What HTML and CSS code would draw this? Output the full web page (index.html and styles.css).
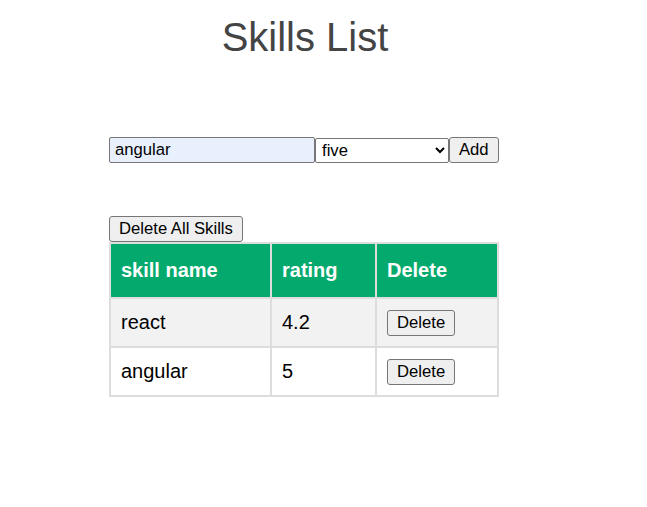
FILE: index.html
```html
<!DOCTYPE html>
<html>
<head>
<meta charset="utf-8">
<title>Skills List</title>
<link rel="stylesheet" href="styles.css">
</head>
<body>
<div class="app">
  <h1 class="title">Skills List</h1>
  <div class="form">
    <input class="skill-input" type="text" value="angular">
    <select class="rating-select">
      <option>five</option>
    </select>
    <button class="btn">Add</button>
  </div>
  <div class="bulk">
    <button class="btn">Delete All Skills</button>
  </div>
  <table class="skills">
    <tr>
      <th class="col-name">skill name</th>
      <th class="col-rating">rating</th>
      <th class="col-del">Delete</th>
    </tr>
    <tr>
      <td>react</td>
      <td>4.2</td>
      <td><button class="btn btn-row">Delete</button></td>
    </tr>
    <tr>
      <td>angular</td>
      <td>5</td>
      <td><button class="btn btn-row">Delete</button></td>
    </tr>
  </table>
</div>
</body>
</html>
```
FILE: styles.css
```css
html, body {
  margin: 0;
  padding: 0;
  background: #ffffff;
}
body {
  font-family: "Liberation Sans", Arial, sans-serif;
  color: #000;
}
.app {
  margin-left: 109px;
  width: 390px;
  padding-top: 14px;
}
.title {
  margin: 0;
  padding-left: 2px;
  font-size: 40px;
  line-height: 46px;
  font-weight: normal;
  text-align: center;
  color: #444444;
}
.form {
  margin-top: 77px;
  display: flex;
  align-items: center;
}
.skill-input {
  box-sizing: border-box;
  width: 206px;
  height: 26px;
  margin: 0;
  padding: 0 5px;
  border: 1px solid #767676;
  border-radius: 2px;
  background: #e8f0fe;
  font-family: "Liberation Sans", Arial, sans-serif;
  font-size: 16.67px;
  color: #000;
}
.rating-select {
  box-sizing: border-box;
  width: 134px;
  height: 25px;
  margin: 0;
  padding: 0 2px;
  border: 1px solid #767676;
  border-radius: 2px;
  background: #ffffff;
  font-family: "Liberation Sans", Arial, sans-serif;
  font-size: 16.67px;
  color: #000;
}
.btn {
  box-sizing: border-box;
  height: 26px;
  margin: 0;
  padding: 0 9px;
  border: 1px solid #767676;
  border-radius: 3px;
  background: #efefef;
  font-family: "Liberation Sans", Arial, sans-serif;
  font-size: 16.67px;
  color: #000;
}
.bulk {
  margin-top: 53px;
  display: flex;
}
.skills {
  width: 390px;
  border-collapse: collapse;
  font-size: 20px;
}
.skills th,
.skills td {
  border: 2px solid #dddddd;
  text-align: left;
  vertical-align: middle;
}
.skills th {
  padding: 15px 10px;
  background: #04aa6d;
  color: #ffffff;
  font-weight: bold;
  line-height: 23px;
}
.skills td {
  padding: 10px;
  line-height: 23px;
  height: 27px;
}
.skills tr:nth-child(even) {
  background: #f2f2f2;
}
.col-name { width: 139px; }
.col-rating { width: 83px; }
.btn-row {
  vertical-align: middle;
}
```
